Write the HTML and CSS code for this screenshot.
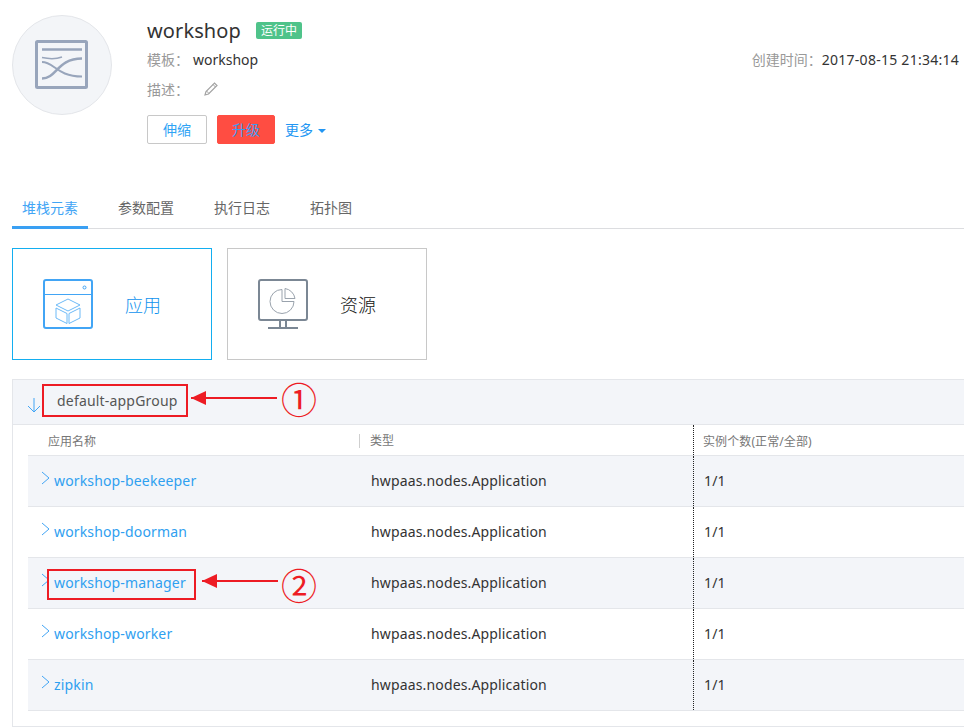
FILE: index.html
```html
<!DOCTYPE html>
<html>

<head>
    <meta charset="UTF-8">
    <title>workshop</title>
    <link rel="stylesheet" href="styles.css">
</head>

<body>
    <div class="page">
        <div class="stackHeader">
            <div class="avatar">
                <svg width="54" height="50" viewBox="0 0 54 50" fill="none" stroke="#98a5bb">
                    <rect x="1.5" y="1.5" width="50" height="46" rx="1" stroke-width="3" />
                    <path d="M7 9.500H47" stroke-width="2.500" />
                    <path d="M7 38.500C22 38.500 22 18.500 47 18.500" stroke-width="2.500" />
                    <path d="M7 22C19 22 22 36.500 47 36.500" stroke-width="2" />
                    <path d="M7 17.500C14 19 20 19.500 27 17" stroke-width="1.500" />
                </svg>
            </div>
            <div class="info">
                <div class="titleRow">
                    <span class="stackName">workshop</span>
                    <span class="statusTag">运行中</span>
                </div>
                <div class="metaRow">
                    <span class="metaLabel">模板：</span><span class="metaValue templateName">workshop</span>
                    <span class="created"><span class="metaLabel">创建时间：</span><span class="metaValue createdTime">2017-08-15 21:34:14</span></span>
                </div>
                <div class="metaRow">
                    <span class="metaLabel">描述：</span>
                    <svg class="pencil" width="16" height="16" viewBox="0 0 16 16" fill="none" stroke="#a3a3a3">
                        <path d="M2 14L3 10.500L11.500 2L14 4.500L5.500 13Z" stroke-width="1.200" />
                        <path d="M3.500 10L6 12.500M10 3.500L12.500 6" stroke-width="1" />
                    </svg>
                </div>
                <div class="actions">
                    <button class="btn btnScale">伸缩</button>
                    <button class="btn btnUpgrade">升级</button>
                    <span class="more">更多<i class="caret"></i></span>
                </div>
            </div>
        </div>

        <div class="tabs">
            <div class="tab active">堆栈元素</div>
            <div class="tab">参数配置</div>
            <div class="tab">执行日志</div>
            <div class="tab">拓扑图</div>
        </div>

        <div class="cards">
            <div class="card selected">
                <svg width="50" height="50" viewBox="0 0 50 50" fill="none" stroke="#42a5f5">
                    <rect x="1" y="1" width="48" height="48" rx="2" stroke-width="2" />
                    <path d="M1 15.500H49" stroke-width="1" />
                    <circle cx="41.500" cy="8.500" r="1.500" stroke-width="1" />
                    <path d="M25 20L37 26L25 32L13 26Z" stroke="#6dbaf7" stroke-width="1" />
                    <path d="M13 29V39L24 44.500V34.500ZM37 29V39L26 44.500V34.500Z" stroke="#6dbaf7" stroke-width="1" />
                </svg>
                <span class="cardName">应用</span>
            </div>
            <div class="card">
                <svg width="50" height="50" viewBox="0 0 50 50" fill="none" stroke="#7b8794">
                    <rect x="1" y="1" width="48" height="40" rx="2" stroke-width="2" />
                    <path d="M22 41V49M28 41V49" stroke-width="2" />
                    <path d="M10 49H40" stroke-width="2" />
                    <path d="M24 10.500A12 12 0 1 0 36 22.500H24Z" stroke="#9aa3ad" stroke-width="1" />
                    <path d="M27 9.500A12 12 0 0 1 37 19.500H27Z" stroke="#9aa3ad" stroke-width="1" />
                </svg>
                <span class="cardName">资源</span>
            </div>
        </div>

        <div class="panel">
            <div class="panelHeader">
                <svg class="arrowDown" width="14" height="16" viewBox="0 0 14 16" fill="none" stroke="#42a5f5" stroke-width="1">
                    <path d="M7 1V15M1 9L7 15L13 9" />
                </svg>
                <span class="groupName">default-appGroup</span>
            </div>
            <div class="appTable">
                <div class="headRow">
                    <div class="cell">应用名称</div>
                    <div class="cell">类型</div>
                    <div class="cell">实例个数(正常/全部)</div>
                </div>
                <div class="row">
                    <div class="cell">
                        <svg class="chevron" width="9" height="14" viewBox="0 0 9 14" fill="none" stroke="#42a5f5"><path d="M1 1L8 7L1 13" /></svg>
                        <a>workshop-beekeeper</a>
                    </div>
                    <div class="cell">hwpaas.nodes.Application</div>
                    <div class="cell">1/1</div>
                </div>
                <div class="row">
                    <div class="cell">
                        <svg class="chevron" width="9" height="14" viewBox="0 0 9 14" fill="none" stroke="#42a5f5"><path d="M1 1L8 7L1 13" /></svg>
                        <a>workshop-doorman</a>
                    </div>
                    <div class="cell">hwpaas.nodes.Application</div>
                    <div class="cell">1/1</div>
                </div>
                <div class="row">
                    <div class="cell">
                        <svg class="chevron" width="9" height="14" viewBox="0 0 9 14" fill="none" stroke="#42a5f5"><path d="M1 1L8 7L1 13" /></svg>
                        <a>workshop-manager</a>
                    </div>
                    <div class="cell">hwpaas.nodes.Application</div>
                    <div class="cell">1/1</div>
                </div>
                <div class="row">
                    <div class="cell">
                        <svg class="chevron" width="9" height="14" viewBox="0 0 9 14" fill="none" stroke="#42a5f5"><path d="M1 1L8 7L1 13" /></svg>
                        <a>workshop-worker</a>
                    </div>
                    <div class="cell">hwpaas.nodes.Application</div>
                    <div class="cell">1/1</div>
                </div>
                <div class="row">
                    <div class="cell">
                        <svg class="chevron" width="9" height="14" viewBox="0 0 9 14" fill="none" stroke="#42a5f5"><path d="M1 1L8 7L1 13" /></svg>
                        <a>zipkin</a>
                    </div>
                    <div class="cell">hwpaas.nodes.Application</div>
                    <div class="cell">1/1</div>
                </div>
            </div>

            <!-- red notes drawn over the screenshot -->
            <div class="noteBox noteOne"></div>
            <div class="noteArrow arrowOne"></div>
            <span class="noteNum numOne">①</span>
            <div class="noteBox noteTwo"></div>
            <div class="noteArrow arrowTwo"></div>
            <span class="noteNum numTwo">②</span>
        </div>
    </div>
</body>

</html>
```

FILE: styles.css
```css
html, body {
    height: 100%;
    overflow: hidden;
}

body {
    margin: 0;
    background-color: #fff;
    font-family: "Noto Sans", "Noto Sans CJK SC", sans-serif;
    font-size: 14px;
    color: #333;
}

.page {
    width: 990px;
    padding: 15px 0 0 12px;
    box-sizing: border-box;
}

/* header */
.stackHeader {
    display: flex;
    height: 175px;
}

.avatar {
    width: 100px;
    height: 100px;
    box-sizing: border-box;
    border: 1px solid #e4e6ea;
    border-radius: 50%;
    background-color: #f3f5f8;
    display: flex;
    align-items: center;
    justify-content: center;
    margin-right: 35px;
}

.info {
    width: 812px;
}

.titleRow {
    display: flex;
    align-items: center;
    height: 30px;
}

.stackName {
    font-size: 20px;
    letter-spacing: 0.1px;
    color: #333;
}

.statusTag {
    margin-left: 15px;
    padding: 0 5px;
    height: 17px;
    line-height: 17px;
    font-size: 12px;
    color: #fff;
    background-color: #4fc38a;
    border-radius: 2px;
}

.metaRow {
    display: flex;
    align-items: center;
    height: 30px;
    box-sizing: border-box;
    padding-bottom: 2px;
}

.metaLabel {
    color: #999;
}

.metaValue {
    color: #333;
}

.templateName {
    margin-left: 4px;
}

.createdTime {
    letter-spacing: 0.26px;
}

.created {
    margin-left: auto;
}

.pencil {
    margin-left: 14px;
}

.actions {
    display: flex;
    align-items: center;
    margin-top: 10px;
}

.btn {
    width: 60px;
    height: 29px;
    padding: 0 0 2px;
    font-family: inherit;
    font-size: 14px;
    border-radius: 2px;
    border: 1px solid #c8c8c8;
    background-color: #fff;
    color: #2fa4f5;
}

.btnUpgrade {
    width: 58px;
    margin-left: 10px;
    border-color: #ff4d42;
    background-color: #ff4d42;
    color: #3d9bf0;
}

.more {
    margin-left: 10px;
    padding-bottom: 2px;
    color: #2196f3;
}

.caret {
    display: inline-block;
    margin-left: 5px;
    vertical-align: middle;
    border-top: 4px solid #2196f3;
    border-left: 4px solid transparent;
    border-right: 4px solid transparent;
}

/* tabs */
.tabs {
    display: flex;
    gap: 20px;
    height: 39px;
    box-sizing: border-box;
    border-bottom: 1px solid #dcdde0;
}

.tab {
    height: 39px;
    box-sizing: border-box;
    padding: 7px 10px 0;
    color: #666;
}

.tab.active {
    color: #42a5f5;
    border-bottom: 3px solid #3aa0f3;
}

/* cards */
.cards {
    display: flex;
    gap: 15px;
    margin-top: 19px;
}

.card {
    width: 200px;
    height: 112px;
    box-sizing: border-box;
    border: 1px solid #c8c8c8;
    display: flex;
    align-items: center;
    padding-left: 30px;
    background-color: #fff;
}

.card.selected {
    border-color: #13aef0;
}

.cardName {
    margin-left: 32px;
    font-size: 18px;
    font-weight: 300;
    color: #111;
}

.selected .cardName {
    color: #0f93ee;
}

/* panel */
.panel {
    position: relative;
    margin-top: 19px;
    border: 1px solid #e4e6ea;
    height: 348px;
    box-sizing: border-box;
}

.panelHeader {
    height: 45px;
    box-sizing: border-box;
    background-color: #f3f5f9;
    border-bottom: 1px solid #e4e6ea;
    display: flex;
    align-items: center;
}

.arrowDown {
    margin: 6px 0 0 14px;
}

.groupName {
    margin-left: 16px;
    padding-bottom: 3px;
    letter-spacing: 0.19px;
    color: #555;
}

.appTable {
    margin-left: 15px;
}

.headRow, .row {
    display: grid;
    grid-template-columns: 331px 334px 1fr;
    box-sizing: border-box;
    border-bottom: 1px solid #e4e6ea;
    align-items: center;
}

.headRow {
    height: 31px;
    font-size: 12px;
    color: #777;
}

.row {
    height: 51px;
    letter-spacing: 0.15px;
}

.row:nth-child(even) {
    background-color: #f3f5f9;
}

.cell {
    height: 100%;
    display: flex;
    align-items: center;
}

.headRow .cell {
    box-sizing: border-box;
    padding-top: 2px;
}

.headRow .cell:first-child {
    padding-left: 20px;
}

.headRow .cell:nth-child(2) {
    padding: 0 0 0 10px;
    margin-top: 1px;
    border-left: 1px solid #cfcfcf;
    height: 14px;
    line-height: 14px;
}

.row .cell {
    padding-bottom: 2px;
    box-sizing: border-box;
}

.row .cell:nth-child(2) {
    padding-left: 12px;
}

.headRow .cell:nth-child(3), .row .cell:nth-child(3) {
    padding-left: 10px;
    border-left: 1px dotted #222;
}

.headRow .cell:nth-child(3) {
    padding-left: 9px;
    letter-spacing: 0.1px;
}

.row a {
    color: #2fa0f0;
}

.chevron {
    flex: none;
    margin: -4px 4px 0 13px;
}

/* red annotations */
.noteBox {
    position: absolute;
    border: 2px solid #ed1c24;
    box-sizing: border-box;
}

.noteOne {
    left: 29px;
    top: 4px;
    width: 146px;
    height: 33px;
}

.noteTwo {
    left: 34px;
    top: 189px;
    width: 149px;
    height: 31px;
}

.noteArrow {
    position: absolute;
    height: 2px;
    background-color: #ed1c24;
}

.noteArrow::before {
    content: "";
    position: absolute;
    left: 0;
    top: -6px;
    border-top: 7px solid transparent;
    border-bottom: 7px solid transparent;
    border-right: 15px solid #ed1c24;
}

.arrowOne {
    left: 178px;
    top: 17px;
    width: 86px;
}

.arrowTwo {
    left: 189px;
    top: 200px;
    width: 76px;
}

.noteNum {
    position: absolute;
    font-family: "Noto Sans CJK SC", sans-serif;
    font-size: 36px;
    line-height: 36px;
    color: #ed1c24;
}

.numOne {
    left: 268px;
    top: 0;
}

.numTwo {
    left: 268px;
    top: 186px;
}
```
